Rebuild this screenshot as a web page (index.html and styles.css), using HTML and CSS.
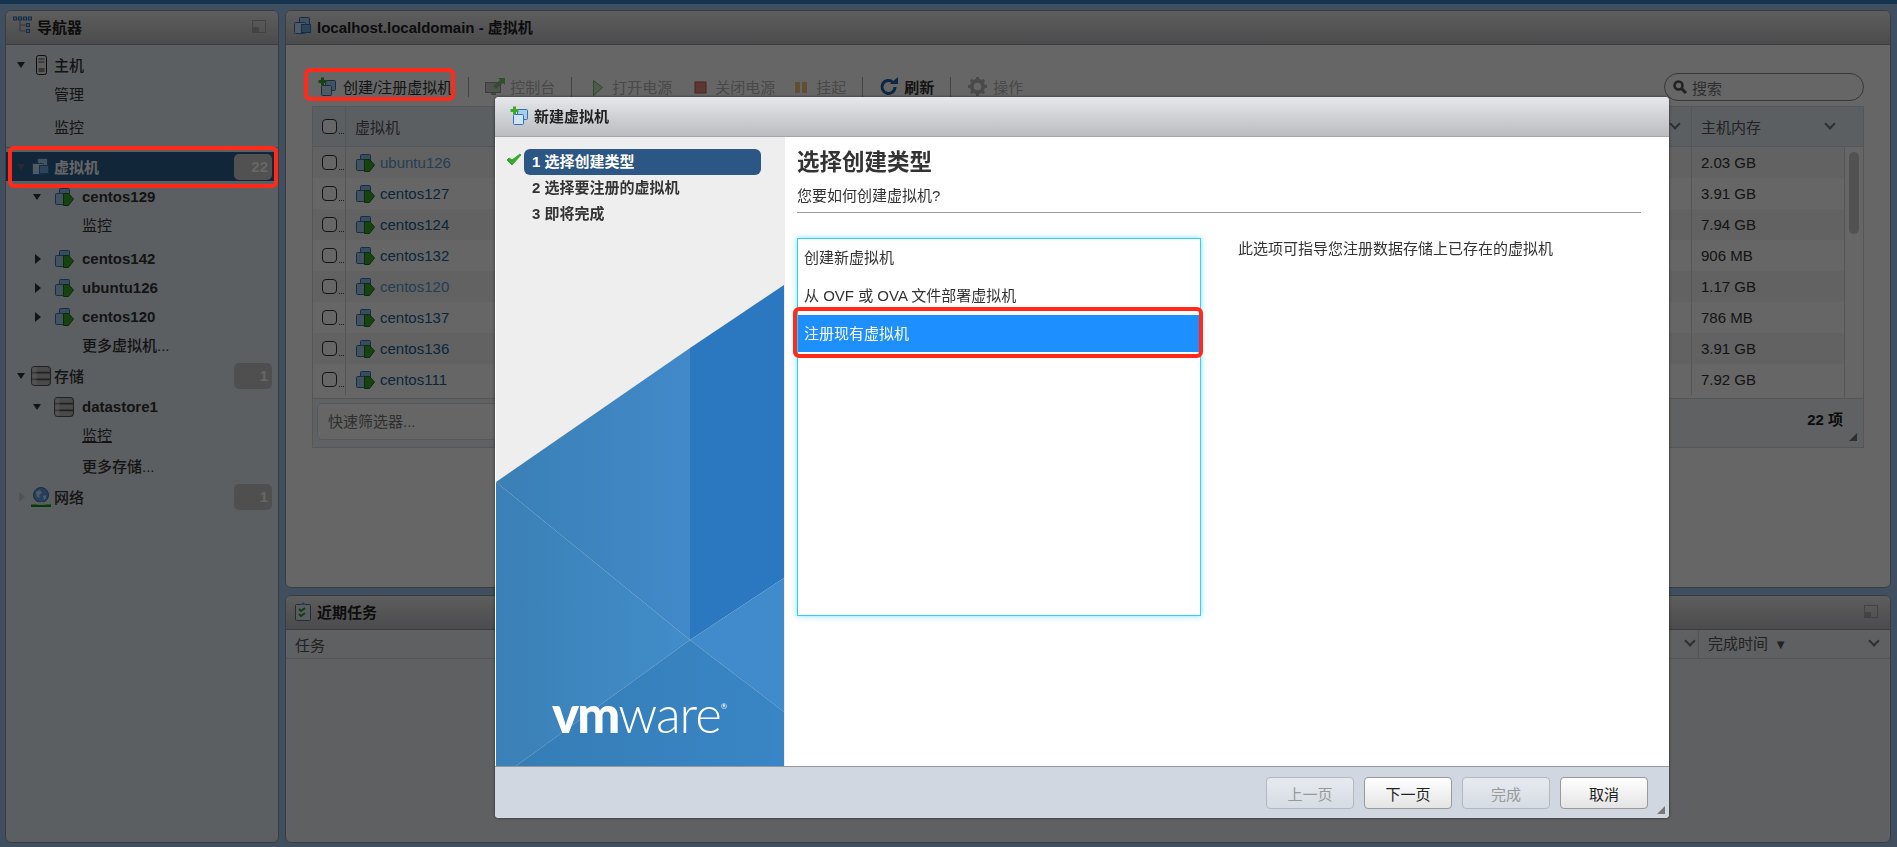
FILE: index.html
```html
<!DOCTYPE html>
<html lang="zh-CN">
<head>
  <meta charset="UTF-8">
  <title>localhost.localdomain - 虚拟机</title>
  <link rel="stylesheet" href="styles.css">
</head>
<body>

  <!-- Shared icons -->
  <svg class="defs" aria-hidden="true">
    <symbol id="i-vms" viewBox="0 0 20 20">
      <rect x="6.500" y="1.500" width="10" height="10" rx="1" fill="#a9cdec" stroke="#2f73b5"/>
      <rect x="1.500" y="6.500" width="11" height="11" rx="1" fill="#cfe3f5" stroke="#2f73b5"/>
      <rect x="8.500" y="8.500" width="9" height="8" fill="#6fa9dc" stroke="#2f73b5"/>
    </symbol>
    <symbol id="i-vm-on" viewBox="0 0 20 20">
      <rect x="5.500" y="1.500" width="10" height="9" rx="1" fill="#8fbde6" stroke="#2f73b5"/>
      <rect x="1.500" y="6.500" width="10" height="11" rx="1" fill="#a9cdec" stroke="#2f73b5"/>
      <path d="M9.500 6.500h5l5 5.500-5 6.500h-5z" fill="#3fa62e" stroke="#17700f"/>
    </symbol>
    <symbol id="i-vm-new" viewBox="0 0 20 20">
      <rect x="7.500" y="3.500" width="10" height="10" rx="1" fill="#a9cdec" stroke="#2f73b5"/>
      <rect x="3.500" y="8.500" width="10" height="10" rx="1" fill="#cfe3f5" stroke="#2f73b5"/>
      <path d="M3 0.500h3v2.500h2.500v3h-2.500v2.500h-3v-2.500h-2.500v-3h2.500z" fill="#3fa62e"/>
    </symbol>
    <symbol id="i-disk" viewBox="0 0 18 18">
      <rect x="0.500" y="0.500" width="17" height="17" rx="3" fill="#b9b9b9" stroke="#555"/>
      <path d="M1 6h16M1 12h16" stroke="#555" stroke-width="1.500"/>
      <rect x="1" y="1" width="4" height="16" fill="#fff" opacity=".35"/>
    </symbol>
    <symbol id="i-min" viewBox="0 0 14 13">
      <rect x="0.500" y="0.500" width="13" height="12" fill="none" stroke="#a8a8a8"/>
      <rect x="1" y="7" width="6" height="5" fill="#a8a8a8"/>
    </symbol>
    <symbol id="i-grip" viewBox="0 0 10 10">
      <path d="M9 1v8H1z" fill="#777"/>
    </symbol>
  </svg>

  <div class="topbar"></div>

  <div class="app">

    <!-- Navigator -->
    <section class="panel nav">
      <header class="panel-head">
        <svg class="head-icon" viewBox="0 0 20 20">
          <path d="M1 3h17M7 3v12h7M7 9h7" fill="none" stroke="#8a8a8a"/>
          <g fill="#9cc8ee" stroke="#2f73b5"><rect x="0.500" y="1" width="3" height="3"/><rect x="5.500" y="1" width="3" height="3"/><rect x="10.500" y="1" width="3" height="3"/><rect x="15.500" y="1" width="3" height="3"/><rect x="13.500" y="7.500" width="3" height="3"/><rect x="13.500" y="13.500" width="3" height="3"/></g>
        </svg>
        <span class="head-title">导航器</span>
        <svg class="min-icon"><use href="#i-min"/></svg>
      </header>
      <div class="tree">
        <div class="row l0 medium">
          <i class="tw down"></i>
          <svg class="ni" viewBox="0 0 20 20"><rect x="5.500" y="0.500" width="10" height="19" rx="2" fill="#e6e6e6" stroke="#222"/><path d="M7.500 4h6M7.500 7h6" stroke="#555"/><rect x="7.500" y="13" width="6" height="4" fill="#888"/></svg>
          <span>主机</span>
        </div>
        <div class="row leaf0">管理</div>
        <div class="row leaf0 gap4">监控</div>
        <div class="nav-sep"></div>
        <div class="row l0 strong selected">
          <i class="tw down faint"></i>
          <svg class="ni"><use href="#i-vms"/></svg>
          <span>虚拟机</span>
          <b class="badge">22</b>
        </div>
        <div class="row l1 strong">
          <i class="tw down"></i>
          <svg class="ni"><use href="#i-vm-on"/></svg>
          <span>centos129</span>
        </div>
        <div class="row leaf1">监控</div>
        <div class="row l1 strong gap4">
          <i class="tw right"></i>
          <svg class="ni"><use href="#i-vm-on"/></svg>
          <span>centos142</span>
        </div>
        <div class="row l1 strong">
          <i class="tw right"></i>
          <svg class="ni"><use href="#i-vm-on"/></svg>
          <span>ubuntu126</span>
        </div>
        <div class="row l1 strong">
          <i class="tw right"></i>
          <svg class="ni"><use href="#i-vm-on"/></svg>
          <span>centos120</span>
        </div>
        <div class="row leaf1 medium">更多虚拟机...</div>
        <div class="row l0 medium gap2">
          <i class="tw down"></i>
          <svg class="ni"><use href="#i-disk"/></svg>
          <span>存储</span>
          <b class="badge">1</b>
        </div>
        <div class="row l1 strong gap1">
          <i class="tw down"></i>
          <svg class="ni"><use href="#i-disk"/></svg>
          <span>datastore1</span>
        </div>
        <div class="row leaf1 under">监控</div>
        <div class="row leaf1 medium gap2">更多存储...</div>
        <div class="row l0 medium gap2">
          <i class="tw right faint"></i>
          <svg class="ni" viewBox="0 0 20 20"><circle cx="10" cy="8" r="7.500" fill="#5aa0e0" stroke="#2f73b5"/><path d="M5 5l4-2 2 3-3 2 1 3-3-1zM12 9l3-1 0 3-2 2z" fill="#cfe3f5"/><path d="M0 19h20" stroke="#0a9a0a" stroke-width="3"/><path d="M7 15h6l1 3H6z" fill="#ddd"/></svg>
          <span>网络</span>
          <b class="badge">1</b>
        </div>
      </div>
    </section>

    <div class="main-col">

      <!-- Virtual machines -->
      <section class="panel main">
        <header class="panel-head">
          <svg class="head-icon"><use href="#i-vms"/></svg>
          <span class="head-title">localhost.localdomain - 虚拟机</span>
        </header>
        <div class="main-body">
          <div class="toolbar">
            <div class="tb-item"><svg class="tb-icon"><use href="#i-vm-new"/></svg>创建/注册虚拟机</div>
            <i class="tb-sep"></i>
            <div class="tb-item off">
              <svg class="tb-icon" viewBox="0 0 20 20"><rect x="0.500" y="5.500" width="15" height="10" fill="#ccc" stroke="#999"/><path d="M6 16h5v2H6z" fill="#aaa"/><path d="M8 9l7-6-2-2h7v7l-2-2-7 6z" fill="#7fc26f"/></svg>
              控制台
            </div>
            <i class="tb-sep"></i>
            <div class="tb-item off">
              <svg class="tb-play" viewBox="0 0 19 20"><path d="M5.500 3.500l9 7-9 8z" fill="#c5e6bb" stroke="#6dbb5b"/></svg>
              打开电源
            </div>
            <div class="tb-item off">
              <svg class="tb-wide" viewBox="0 0 22 20"><rect x="7" y="5" width="11" height="11" fill="#e58b85" stroke="#c9554c"/></svg>
              关闭电源
            </div>
            <div class="tb-item off">
              <svg class="tb-play wide2" viewBox="0 0 20 20"><path d="M4 5h5v11H4zM11 5h5v11h-5z" fill="#f1c583"/></svg>
              挂起
            </div>
            <i class="tb-sep"></i>
            <div class="tb-item bold">
              <svg class="tb-icon" viewBox="0 0 20 20"><path d="M16 10a6.500 6.500 0 1 1-2-4.700" fill="none" stroke="#1d62a8" stroke-width="3"/><path d="M11 7h8V0z" fill="#1d62a8"/></svg>
              刷新
            </div>
            <i class="tb-sep"></i>
            <div class="tb-item off">
              <svg class="tb-gear" viewBox="0 0 22 22"><circle cx="11" cy="11" r="6" fill="none" stroke="#b8b8b8" stroke-width="4"/><path d="M11 1v20M1 11h20M4 4l14 14M18 4L4 18" stroke="#b8b8b8" stroke-width="3"/><circle cx="11" cy="11" r="4" fill="#fff"/></svg>
              操作
            </div>
            <label class="search">
              <svg class="search-icon" viewBox="0 0 14 14"><circle cx="5.500" cy="5.500" r="4" fill="none" stroke="#555" stroke-width="2.500"/><path d="M8.500 8.500l4.500 4.500" stroke="#555" stroke-width="3"/></svg>
              搜索
            </label>
          </div>

          <div class="vm-table">
            <div class="vm-head">
              <div class="c-check"><i class="box"></i><em></em></div>
              <div class="c-name">虚拟机</div>
              <div class="c-fill"><i class="chev"></i></div>
              <div class="c-mem">主机内存<i class="chev"></i></div>
            </div>
            <div class="vm-rows">
              <div class="vm-list">
                <div class="vm-row"><div class="c-check"><i class="box"></i><em></em></div><div class="c-name"><svg class="ni"><use href="#i-vm-on"/></svg><a class="seen">ubuntu126</a></div><div class="c-fill"></div><div class="c-mem">2.03 GB</div></div>
                <div class="vm-row"><div class="c-check"><i class="box"></i><em></em></div><div class="c-name"><svg class="ni"><use href="#i-vm-on"/></svg><a>centos127</a></div><div class="c-fill"></div><div class="c-mem">3.91 GB</div></div>
                <div class="vm-row"><div class="c-check"><i class="box"></i><em></em></div><div class="c-name"><svg class="ni"><use href="#i-vm-on"/></svg><a>centos124</a></div><div class="c-fill"></div><div class="c-mem">7.94 GB</div></div>
                <div class="vm-row"><div class="c-check"><i class="box"></i><em></em></div><div class="c-name"><svg class="ni"><use href="#i-vm-on"/></svg><a>centos132</a></div><div class="c-fill"></div><div class="c-mem">906 MB</div></div>
                <div class="vm-row"><div class="c-check"><i class="box"></i><em></em></div><div class="c-name"><svg class="ni"><use href="#i-vm-on"/></svg><a class="seen">centos120</a></div><div class="c-fill"></div><div class="c-mem">1.17 GB</div></div>
                <div class="vm-row"><div class="c-check"><i class="box"></i><em></em></div><div class="c-name"><svg class="ni"><use href="#i-vm-on"/></svg><a>centos137</a></div><div class="c-fill"></div><div class="c-mem">786 MB</div></div>
                <div class="vm-row"><div class="c-check"><i class="box"></i><em></em></div><div class="c-name"><svg class="ni"><use href="#i-vm-on"/></svg><a>centos136</a></div><div class="c-fill"></div><div class="c-mem">3.91 GB</div></div>
                <div class="vm-row"><div class="c-check"><i class="box"></i><em></em></div><div class="c-name"><svg class="ni"><use href="#i-vm-on"/></svg><a>centos111</a></div><div class="c-fill"></div><div class="c-mem">7.92 GB</div></div>
              </div>
              <div class="scroll"><i></i></div>
            </div>
            <div class="vm-foot">
              <div class="quick">快速筛选器...</div>
              <b class="count">22 项</b>
              <svg class="grip"><use href="#i-grip"/></svg>
            </div>
          </div>
        </div>
      </section>

      <!-- Recent tasks -->
      <section class="panel tasks">
        <header class="panel-head">
          <svg class="head-icon" viewBox="0 0 20 20"><rect x="2.500" y="3.500" width="15" height="16" rx="1" fill="#dfe8ee" stroke="#667"/><path d="M7 4l3-3 3 3z" fill="#5aa0d8"/><path d="M6 8l2 2 4-3M6 13l2 2 4-3" fill="none" stroke="#2e9a2e" stroke-width="2"/></svg>
          <span class="head-title">近期任务</span>
          <svg class="min-icon"><use href="#i-min"/></svg>
        </header>
        <div class="task-head">
          <div class="t-name">任务</div>
          <i class="chev"></i>
          <div class="t-done">完成时间 <small>▼</small><i class="chev"></i></div>
        </div>
      </section>
    </div>
  </div>

  <div class="overlay"></div>

  <!-- New VM wizard -->
  <div class="dialog">
    <header class="dialog-head">
      <svg class="head-icon"><use href="#i-vm-new"/></svg>
      <span class="head-title">新建虚拟机</span>
    </header>
    <div class="dialog-body">
      <aside class="wizard">
        <ol class="steps">
          <li class="step current">
            <svg class="check" viewBox="0 0 16 13"><path d="M1 7l5 5L15 2l-1-1-8 6-3-2z" fill="#38a92a" stroke="#38a92a"/></svg>
            1 选择创建类型
          </li>
          <li class="step">2 选择要注册的虚拟机</li>
          <li class="step">3 即将完成</li>
        </ol>
        <svg class="wizard-art" viewBox="0 0 288 486">
          <defs>
            <linearGradient id="g1"><stop offset="0" stop-color="#3a7fb5"/><stop offset="1" stop-color="#4189c9"/></linearGradient>
            <linearGradient id="g2"><stop offset="0" stop-color="#3b80b6"/><stop offset="1" stop-color="#418dca"/></linearGradient>
            <linearGradient id="g3"><stop offset="0" stop-color="#357db6"/><stop offset="1" stop-color="#3985c5"/></linearGradient>
          </defs>
          <path d="M194 68L288 5v293l-94 62z" fill="#2b78c1"/>
          <path d="M0 202L194 68v292z" fill="url(#g1)"/>
          <path d="M0 202l194 158L20 486H0z" fill="url(#g2)"/>
          <path d="M194 360l94-62v134z" fill="#418bcc"/>
          <path d="M194 360l94 72v54H20z" fill="url(#g3)"/>
          <text class="logo" x="56" y="453"><tspan class="logo-vm">vm</tspan><tspan class="logo-ware">ware</tspan><tspan class="logo-r" dy="-24">®</tspan></text>
        </svg>
      </aside>
      <div class="content">
        <h1 class="content-title">选择创建类型</h1>
        <p class="content-sub">您要如何创建虚拟机?</p>
        <div class="choice">
          <ul class="choice-list">
            <li>创建新虚拟机</li>
            <li>从 OVF 或 OVA 文件部署虚拟机</li>
            <li class="active">注册现有虚拟机</li>
          </ul>
          <p class="choice-help">此选项可指导您注册数据存储上已存在的虚拟机</p>
        </div>
      </div>
    </div>
    <footer class="dialog-foot">
      <button class="btn" disabled>上一页</button>
      <button class="btn">下一页</button>
      <button class="btn" disabled>完成</button>
      <button class="btn">取消</button>
      <svg class="grip dialog-grip"><use href="#i-grip"/></svg>
    </footer>
  </div>

  <!-- Red annotation boxes -->
  <div class="mark mark-nav"></div>
  <div class="mark mark-tool"></div>
  <div class="mark mark-item"></div>

</body>
</html>
```

FILE: styles.css
```css
/* Page */
* {
  box-sizing: border-box;
}

body {
  margin: 0;
  height: 847px;
  overflow: hidden;
  font-family: "Liberation Sans", "Noto Sans CJK SC", sans-serif;
  font-size: 15px;
  color: #333;
  background: #9ec6ee;
}

.defs {
  position: absolute;
  width: 0;
  height: 0;
}

.topbar {
  height: 4px;
  background: #3482c6;
}

.app {
  display: flex;
  gap: 6px;
  height: 839px;
  padding: 6px 6px 0 5px;
}

/* Panels */
.panel {
  display: flex;
  flex-direction: column;
  border: 1px solid #8e9aa6;
  border-radius: 6px;
  background: #fff;
  overflow: hidden;
}

.panel-head {
  display: flex;
  flex: none;
  align-items: center;
  height: 34px;
  padding: 0 12px 3px 7px;
  background: linear-gradient(#e9e9eb, #bcbdc0);
  border-bottom: 1px solid #999;
}

.head-icon {
  flex: none;
  width: 20px;
  height: 20px;
  margin-right: 4px;
}

.head-title {
  font-weight: bold;
  color: #222;
}

.min-icon {
  width: 14px;
  height: 13px;
  margin-left: auto;
}

/* Navigator */
.nav {
  flex: none;
  width: 274px;
  background: #e6edf2;
}

.tree {
  padding-top: 5px;
}

.row {
  display: flex;
  align-items: center;
  height: 29px;
  white-space: nowrap;
}

.strong {
  font-weight: bold;
}

.medium {
  font-weight: 500;
}

.under {
  text-decoration: underline;
}

.l0 {
  padding-left: 11px;
}

.l0 .tw {
  width: 14px;
}

.l0 .ni {
  margin-right: 3px;
}

.l1 {
  padding-top: 2px;
  padding-left: 27px;
}

.l1 .tw {
  width: 21px;
}

.l1 .ni {
  margin-right: 8px;
}

.leaf0 {
  padding-left: 48px;
}

.leaf1 {
  padding-left: 76px;
}

.gap1 { margin-top: 1px; }
.gap2 { margin-top: 2px; }
.gap4 { margin-top: 4px; }

.ni {
  flex: none;
  width: 20px;
  height: 20px;
}

.tw {
  flex: none;
  display: block;
  height: 0;
}

.tw::before {
  content: "";
  display: block;
  width: 0;
  height: 0;
  transform: translateY(-3px);
}

.tw.down::before {
  border-left: 4.500px solid transparent;
  border-right: 4.500px solid transparent;
  border-top: 6px solid #333;
}

.tw.right::before {
  margin-left: 2px;
  transform: translateY(-5px);
  border-top: 5px solid transparent;
  border-bottom: 5px solid transparent;
  border-left: 6px solid #333;
}

.tw.faint.down::before {
  border-top-color: #668;
}

.tw.faint.right::before {
  border-left-color: #c8ccd0;
}

.nav-sep {
  height: 1px;
  margin: 6px 0 4px;
  background: #aaa;
}

.selected {
  height: 29px;
  background: #2d5f8f;
  color: #fff;
}

.badge {
  width: 38px;
  height: 26px;
  margin-left: auto;
  margin-right: 6px;
  padding-right: 4px;
  border-radius: 5px;
  background: #c6c6c6;
  color: #fff;
  font-weight: bold;
  line-height: 26px;
  text-align: right;
}

.selected .badge {
  background: #cacaca;
}

/* Main column */
.main-col {
  display: flex;
  flex: 1;
  flex-direction: column;
  gap: 7px;
  min-width: 0;
}

.main {
  flex: none;
  height: 578px;
}

.main-body {
  padding: 28px 26px 0 26px;
}

.toolbar {
  display: flex;
  align-items: center;
  gap: 16px;
  height: 28px;
  padding-left: 6px;
}

.tb-item {
  display: flex;
  align-items: center;
  gap: 5px;
  padding-bottom: 1px;
  white-space: nowrap;
}

.tb-item.off {
  color: #b6b6b6;
}

.tb-item.bold {
  font-weight: bold;
}

.tb-icon {
  width: 20px;
  height: 20px;
}

.tb-play {
  width: 19px;
  height: 20px;
}

.tb-play.wide2 {
  width: 20px;
}

.tb-wide {
  width: 22px;
  height: 20px;
}

.tb-gear {
  width: 21px;
  height: 21px;
}

.tb-sep {
  width: 1px;
  height: 20px;
  background: #aaa;
}

.search {
  display: flex;
  align-items: center;
  gap: 5px;
  width: 200px;
  height: 28px;
  margin-left: auto;
  padding-left: 8px;
  border: 1px solid #8a8a8a;
  border-radius: 14px;
  color: #777;
}

.search-icon {
  width: 14px;
  height: 14px;
}

/* VM grid */
.vm-table {
  margin-top: 5px;
  border: 1px solid #d3d9df;
}

.vm-head {
  display: flex;
  height: 40px;
  align-items: stretch;
  background: #e6edf5;
  border-bottom: 1px solid #d3d9df;
  color: #555;
}

.vm-rows {
  display: flex;
  height: 251px;
}

.vm-list {
  flex: 1;
  min-width: 0;
}

.vm-row {
  display: flex;
  height: 31px;
  align-items: stretch;
}

.vm-row:nth-child(odd) {
  background: #f4f4f4;
}

.c-check {
  display: flex;
  flex: none;
  width: 33px;
  padding-left: 9px;
  align-items: center;
  border-right: 1px solid #d3d9df;
}

.c-check em {
  flex: none;
  width: 5px;
  height: 1px;
  margin: 14px 0 0 2px;
  border-bottom: 1px dotted #444;
}

.box {
  flex: none;
  width: 15px;
  height: 15px;
  border: 1.500px solid #333;
  border-radius: 4px;
  background: #fff;
}

.c-name {
  display: flex;
  flex: none;
  width: 400px;
  align-items: center;
  gap: 5px;
  padding-left: 9px;
}

.c-name a {
  color: #205f96;
}

.c-name a.seen {
  color: #5a9bd0;
}

.c-fill {
  position: relative;
  flex: 1;
}

.c-mem {
  position: relative;
  display: flex;
  flex: none;
  width: 153px;
  align-items: center;
  padding-left: 9px;
  border-left: 1px solid #d3d9df;
}

.vm-head .c-mem {
  width: 172px;
}

.chev {
  position: absolute;
  right: 12px;
  top: 50%;
  width: 8px;
  height: 8px;
  margin-top: -7px;
  border-right: 2px solid #777;
  border-bottom: 2px solid #777;
  transform: rotate(45deg);
}

.vm-head .c-mem .chev {
  right: 29px;
}

.scroll {
  flex: none;
  width: 19px;
  padding: 5px 4px;
  border-left: 1px solid #d3d9df;
}

.scroll i {
  display: block;
  height: 82px;
  border-radius: 5px;
  background: #ccc;
}

.vm-foot {
  position: relative;
  display: flex;
  align-items: center;
  height: 49px;
  padding: 0 20px 4px 4px;
  background: #eef2f6;
  border-top: 1px solid #d3d9df;
}

.quick {
  width: 300px;
  height: 37px;
  padding-left: 10px;
  border: 1px solid #d8dde2;
  border-radius: 5px;
  background: #fff;
  line-height: 35px;
  color: #777;
}

.count {
  margin-left: auto;
  padding-bottom: 6px;
  color: #222;
}

.grip {
  position: absolute;
  right: 5px;
  bottom: 5px;
  width: 10px;
  height: 10px;
}

/* Recent tasks */
.tasks {
  flex: 1;
  background: #eef1f3;
}

.task-head {
  position: relative;
  display: flex;
  height: 29px;
  align-items: center;
  border-bottom: 1px solid #cfd4d8;
  color: #555;
}

.t-name {
  padding-left: 9px;
}

.task-head > .chev {
  right: 196px;
}

.t-done {
  position: absolute;
  right: 0;
  top: 0;
  width: 192px;
  height: 28px;
  padding-left: 9px;
  border-left: 1px solid #cfd4d8;
  line-height: 28px;
}

.t-done small {
  margin-left: 2px;
  font-size: 13px;
}

/* Dim layer and dialog */
.overlay {
  position: fixed;
  inset: 0;
  background: rgba(0, 0, 0, 0.6);
}

.dialog {
  position: absolute;
  left: 495px;
  top: 97px;
  display: flex;
  flex-direction: column;
  width: 1174px;
  height: 721px;
  border-radius: 4px;
  background: #fff;
  box-shadow: 0 0 3px rgba(0, 0, 0, 0.6);
  overflow: hidden;
}

.dialog-head {
  display: flex;
  flex: none;
  align-items: center;
  height: 40px;
  padding: 0 0 2px 15px;
  background: linear-gradient(#e6e7ea, #bbbcc0);
  border-bottom: 1px solid #a5a6a9;
}

.dialog-body {
  display: flex;
  flex: 1;
  min-height: 0;
}

.wizard {
  position: relative;
  flex: none;
  width: 289px;
  margin-left: 1px;
  padding-top: 12px;
  background: #eee;
}

.steps {
  position: relative;
  z-index: 1;
  margin: 0;
  padding: 0 24px 0 28px;
  list-style: none;
}

.step {
  position: relative;
  height: 26px;
  padding-left: 8px;
  border-radius: 6px;
  font-weight: bold;
  line-height: 25px;
  color: #333;
}

.step.current {
  background: #2c5684;
  color: #fff;
}

.check {
  position: absolute;
  left: -18px;
  top: 4px;
  width: 16px;
  height: 13px;
}

.wizard-art {
  position: absolute;
  left: 0;
  bottom: 0;
  width: 288px;
  height: 486px;
}

.logo {
  font-family: Lato, "Liberation Sans", sans-serif;
  font-size: 51px;
  fill: #fff;
}

.logo-vm {
  font-weight: 900;
  letter-spacing: -2px;
}

.logo-ware {
  font-weight: 300;
  letter-spacing: -1px;
}

.logo-r {
  font-size: 8px;
}

.content {
  flex: 1;
  min-width: 0;
  padding: 10px 28px 0 12px;
}

.content-title {
  margin: 0;
  font-size: 22.500px;
  line-height: 32px;
  color: #333;
}

.content-sub {
  margin: 6px 0 0;
  padding-bottom: 6px;
  border-bottom: 1px solid #999;
  line-height: 21px;
}

.choice {
  display: flex;
  margin-top: 25px;
}

.choice-list {
  flex: none;
  width: 404px;
  height: 378px;
  margin: 0;
  padding: 0;
  list-style: none;
  border: 1px solid #33ccff;
  box-shadow: 0 0 6px rgba(51, 204, 255, 0.6);
}

.choice-list li {
  height: 38px;
  padding-left: 6px;
  line-height: 38px;
}

.choice-list li.active {
  height: 37px;
  background: #1e8fff;
  color: #fff;
}

.choice-help {
  margin: 0 0 0 37px;
  line-height: 21px;
}

.dialog-foot {
  position: relative;
  display: flex;
  flex: none;
  justify-content: flex-end;
  gap: 10px;
  height: 52px;
  padding: 10px 21px 0 0;
  background: #d0d7e0;
  border-top: 1px solid #999;
}

.btn {
  width: 88px;
  height: 32px;
  padding: 0;
  border: 1px solid #999;
  border-radius: 4px;
  background: linear-gradient(#fff, #e4e4e4);
  font: inherit;
  color: #222;
}

.btn:disabled {
  border-color: #b4b8bc;
  background: linear-gradient(#e6eaf0, #d6dce4);
  color: #999;
}

.dialog-grip {
  right: 3px;
  bottom: 3px;
}

/* Red annotation boxes */
.mark {
  position: absolute;
  border: 4px solid #ff2a1a;
  border-radius: 6px;
}

.mark-nav {
  left: 8px;
  top: 146px;
  width: 270px;
  height: 42px;
}

.mark-tool {
  left: 304px;
  top: 68px;
  width: 151px;
  height: 33px;
}

.mark-item {
  left: 793px;
  top: 307px;
  width: 410px;
  height: 51px;
}
```
